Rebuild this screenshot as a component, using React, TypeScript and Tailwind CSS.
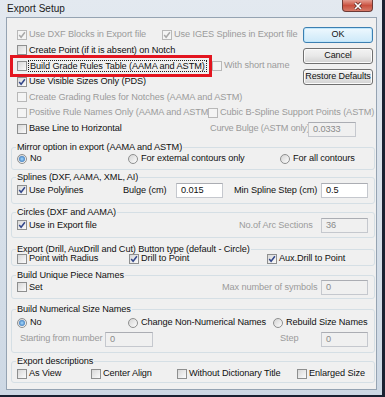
import React from 'react';

type CheckProps = {
  label: string;
  checked?: boolean;
  disabled?: boolean;
  focus?: boolean;
  className?: string;
};

const Box = ({ checked, disabled }: { checked?: boolean; disabled?: boolean }) => (
  <span
    className={
      disabled
        ? 'flex h-[10px] w-[10px] shrink-0 items-center justify-center border border-[#b8b8b8] bg-[#f4f4f4]'
        : 'flex h-[10px] w-[10px] shrink-0 items-center justify-center border border-[#8e8f8f] bg-linear-to-br from-[#d8d8d8] to-[#fbfbfb]'
    }
  >
    {checked && (
      <svg viewBox="0 0 8 8" className="h-[8px] w-[8px]">
        <path
          d="M1.2 4 L3.1 6.2 L6.9 1.2"
          fill="none"
          stroke={disabled ? '#a9a9a9' : '#33478a'}
          strokeWidth="1.5"
        />
      </svg>
    )}
  </span>
);

const Check = ({ label, checked, disabled, focus, className = '' }: CheckProps) => (
  <div className={`flex shrink-0 items-center ${focus ? 'gap-[1px]' : 'gap-[2px]'} ${className}`}>
    <Box checked={checked} disabled={disabled} />
    {focus ? (
      <span className="border border-dotted border-[#222] px-[1px] leading-[10px] whitespace-nowrap">{label}</span>
    ) : (
      <span className={`whitespace-nowrap ${disabled ? 'text-[#9b9b9b]' : ''}`}>{label}</span>
    )}
  </div>
);

const Radio = ({ label, on, className = '' }: { label: string; on?: boolean; className?: string }) => (
  <div className={`flex shrink-0 items-center gap-[3px] ${className}`}>
    <span className="flex h-[10px] w-[10px] shrink-0 items-center justify-center rounded-full border border-[#8e8f8f] bg-linear-to-br from-[#d4d4d4] to-[#fdfdfd]">
      {on && <span className="h-[6px] w-[6px] rounded-full bg-radial from-[#a8dcff] to-[#1b5ea8]" />}
    </span>
    <span className="whitespace-nowrap">{label}</span>
  </div>
);

const Field = ({ value, disabled, className = '' }: { value: string; disabled?: boolean; className?: string }) => (
  <div
    className={`flex h-[15px] shrink-0 items-center border border-[#c5c8ce] border-t-[#abadb3] pl-[4px] leading-[13px] ${
      disabled ? 'bg-[#f0f0f0] text-[#8a8a8a]' : 'bg-white'
    } ${className}`}
  >
    {value}
  </div>
);

const Btn = ({ label, primary }: { label: string; primary?: boolean }) => (
  <div
    className={
      primary
        ? 'flex h-[16px] w-[70px] items-center justify-center whitespace-nowrap rounded-[3px] border border-[#3c7fb1] bg-linear-to-b from-[#eef8fe] to-[#cde9f9] text-[9px] shadow-[inset_0_0_0_1px_#bfe6fb]'
        : 'flex h-[16px] w-[70px] items-center justify-center whitespace-nowrap rounded-[3px] border border-[#707070] bg-linear-to-b from-[#f3f3f3] via-[#e8e8e8] to-[#d2d2d2] text-[9px] shadow-[inset_0_0_0_1px_#fbfbfb]'
    }
  >
    {label}
  </div>
);

const Group = ({ title, className, children }: { title: string; className: string; children: React.ReactNode }) => (
  <fieldset className={`ml-[4px] mr-[1px] rounded-[3px] border border-[#d5dfe5] pl-[4px] ${className}`}>
    <legend className="px-[1px] leading-[12px]">{title}</legend>
    {children}
  </fieldset>
);

const Gray = ({ children, className = '' }: { children: React.ReactNode; className?: string }) => (
  <span className={`shrink-0 whitespace-nowrap text-[#9b9b9b] ${className}`}>{children}</span>
);

export default function App() {
  return (
    <div className="h-[397px] w-[385px] overflow-hidden bg-[#1a2131] font-['Liberation_Sans',Arial,sans-serif] text-[9.2px] tracking-[-0.1px] text-[#111]">
      <div className="flex h-[395px] w-[382px] flex-col bg-linear-to-b from-[#e3e9f0] to-[#cdd8e4]">
        {/* title bar */}
        <div className="flex h-[17px] items-start">
          <span className="ml-[7px] mt-[3px] text-[10px] leading-[11px] tracking-normal text-[#1b1b1b]">
            Export Setup
          </span>
          <span className="ml-auto mr-[9px] flex h-[12px] w-[31px] items-center justify-center rounded-b-[4px] border border-t-0 border-[#6d3a36] bg-linear-to-b from-[#e39c90] via-[#c9503f] to-[#d77a68]">
            <svg viewBox="0 0 10 8" className="h-[8px] w-[10px]">
              <path d="M2 1 L8 7 M8 1 L2 7" stroke="#5a2622" strokeWidth="3" />
              <path d="M2 1 L8 7 M8 1 L2 7" stroke="#fff" strokeWidth="1.7" />
            </svg>
          </span>
        </div>

        <div className="flex">
          <div className="w-[6px]" />
          {/* client area */}
          <div className="h-[373px] w-[371px] border border-[#95a3b2] bg-[#f0f0f0]">
            <div className="flex pt-[9px]">
              <div className="flex w-[296px] flex-col pl-[10px]">
                <div className="flex h-[16px] items-center">
                  <Check label="Use DXF Blocks in Export file" checked disabled className="w-[145px]" />
                  <Check label="Use IGES Splines in Export file" checked disabled />
                </div>
                <div className="flex h-[15px] items-center">
                  <Check label="Create Point (if it is absent) on Notch" />
                </div>
                <div className="relative flex h-[16px] items-center">
                  <Check label="Build Grade Rules Table (AAMA and ASTM)" focus className="w-[195px]" />
                  <Check label="With short name" disabled />
                  <span className="absolute left-[-7px] top-[-3px] h-[22px] w-[202px] border-[3px] border-[#e3151f]" />
                </div>
                <div className="flex h-[16px] items-center">
                  <Check label="Use Visible Sizes Only (PDS)" checked />
                </div>
              </div>
              <div className="flex flex-col gap-[5px]">
                <Btn label="OK" primary />
                <Btn label="Cancel" />
                <Btn label="Restore Defaults" />
              </div>
            </div>

            <div className="flex flex-col pl-[10px]">
              <div className="flex h-[15px] items-center">
                <Check label="Create Grading Rules for Notches (AAMA and ASTM)" disabled />
              </div>
              <div className="flex h-[16px] items-center">
                <Check label="Positive Rule Names Only (AAMA and ASTM)" disabled className="w-[191px]" />
                <Check label="Cubic B-Spline Support Points (ASTM)" disabled />
              </div>
              <div className="flex h-[16px] items-center">
                <Check label="Base Line to Horizontal" className="w-[193px]" />
                <Gray className="w-[98px] tracking-[-0.2px]">Curve Bulge (ASTM only)</Gray>
                <Field value="0.0333" disabled className="w-[48px]" />
              </div>
            </div>

            <Group title="Mirror option in export (AAMA and ASTM)" className="mt-[4px] h-[29px]">
              <div className="flex h-[12px] items-center pl-[1px]">
                <Radio label="No" on className="w-[111px]" />
                <Radio label="For external contours only" className="w-[152px]" />
                <Radio label="For all contours" />
              </div>
            </Group>

            <Group title="Splines (DXF, AAMA, XML, AI)" className="mt-[1px] h-[33px]">
              <div className="flex h-[15px] items-center pl-[1px]">
                <Check label="Use Polylines" checked className="w-[106px]" />
                <span className="w-[53px] shrink-0">Bulge (cm)</span>
                <Field value="0.015" className="w-[47px]" />
                <span className="ml-[11px] w-[87px] shrink-0 whitespace-nowrap">Min Spline Step (cm)</span>
                <Field value="0.5" className="w-[47px]" />
              </div>
            </Group>

            <Group title="Circles (DXF and AAMA)" className="mt-[2px] h-[32px]">
              <div className="flex h-[15px] items-center pl-[1px]">
                <Check label="Use in Export file" checked className="w-[222px]" />
                <Gray className="w-[82px]">No.of Arc Sections</Gray>
                <Field value="36" disabled className="w-[47px]" />
              </div>
            </Group>

            <Group title="Export (Drill, AuxDrill and Cut) Button type (default - Circle)" className="mt-[5px] h-[23px]">
              <div className="-mt-[1px] flex h-[10px] items-center pl-[1px]">
                <Check label="Point with Radius" className="w-[112px]" />
                <Check label="Drill to Point" checked className="w-[138px]" />
                <Check label="Aux.Drill to Point" checked />
              </div>
            </Group>

            <Group title="Build Unique Piece Names" className="mt-[3px] h-[30px]">
              <div className="-mt-[1px] flex h-[15px] items-center pl-[1px]">
                <Check label="Set" className="w-[205px]" />
                <Gray className="w-[99px]">Max number of symbols</Gray>
                <Field value="0" disabled className="w-[47px]" />
              </div>
            </Group>

            <Group title="Build Numerical Size Names" className="mt-[4px] h-[50px]">
              <div className="flex h-[16px] items-center pl-[1px]">
                <Radio label="No" on className="w-[111px]" />
                <Radio label="Change Non-Numerical Names" className="w-[145px]" />
                <Radio label="Rebuild Size Names" />
              </div>
              <div className="flex h-[16px] items-center pl-[1px]">
                <Gray className="w-[88px] pl-[3px] tracking-[-0.2px]">Starting from number</Gray>
                <Field value="0" disabled className="w-[48px]" />
                <Gray className="ml-[127px] w-[41px]">Step</Gray>
                <Field value="0" disabled className="w-[47px]" />
              </div>
            </Group>

            <Group title="Export descriptions" className="mt-[2px] h-[28px]">
              <div className="flex h-[13px] items-center pl-[1px]">
                <Check label="As View" className="w-[74px]" />
                <Check label="Center Align" className="w-[86px]" />
                <Check label="Without Dictionary Title" className="w-[120px]" />
                <Check label="Enlarged Size" />
              </div>
            </Group>
          </div>
          <div className="w-[5px]" />
        </div>
        <div className="h-[5px]" />
      </div>
    </div>
  );
}
